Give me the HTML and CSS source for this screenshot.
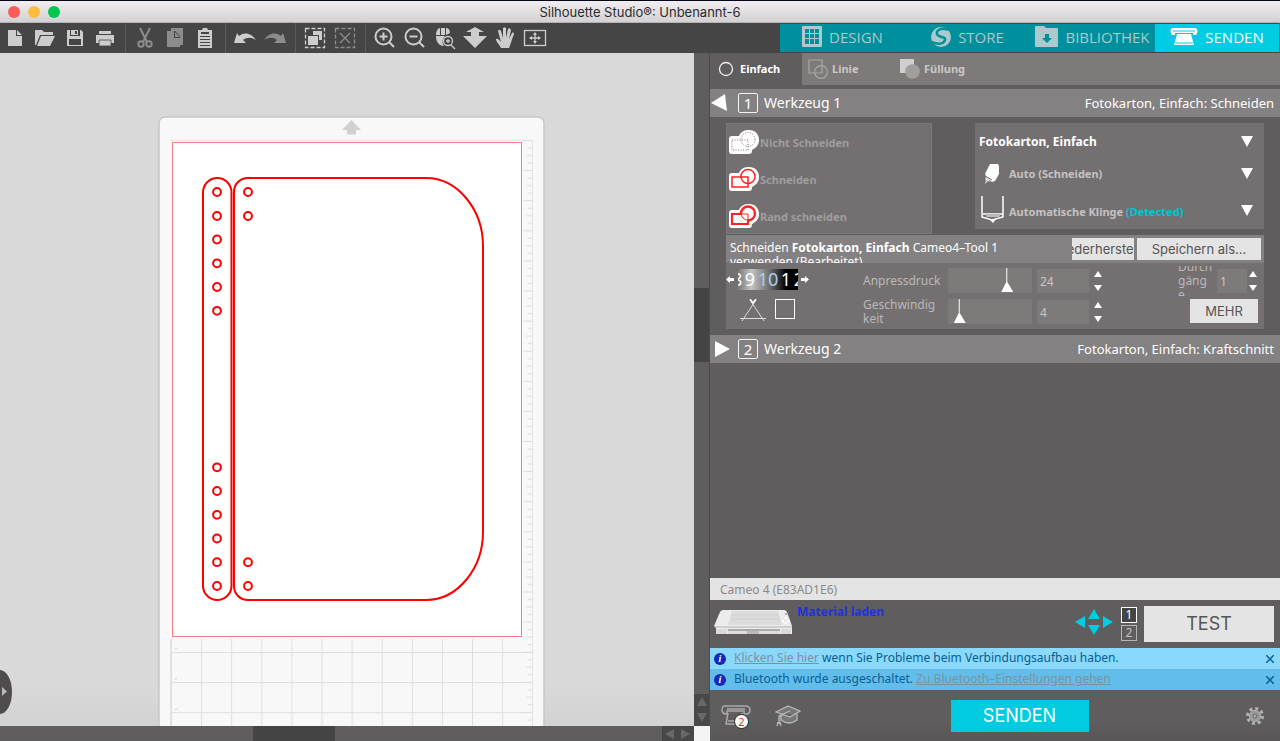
FILE: index.html
```html
<!DOCTYPE html>
<html lang="de">
<head>
<meta charset="utf-8">
<title>Silhouette Studio®: Unbenannt-6</title>
<link rel="stylesheet" href="styles.css">
</head>
<body>
<header class="titlebar">
  <div class="lights"><i class="light red"></i><i class="light amber"></i><i class="light green"></i></div>
  <span class="title">Silhouette Studio®: Unbenannt-6</span>
</header>

<div class="topbar">
  <div class="tools">
    <div class="group">
      <button class="tool" aria-label="Neu"><svg viewBox="0 0 30 30"><path d="M8 7h8v6h6v10H8zM17 7l5 5h-5z"/></svg></button>
      <button class="tool" aria-label="Öffnen"><svg viewBox="0 0 30 30"><path d="M5 7h7l2 2h9v3H10L6 22H5zM11 13h14l-5 10H7z"/></svg></button>
      <button class="tool" aria-label="Speichern"><svg viewBox="0 0 30 30"><path fill-rule="evenodd" d="M7 7h3v6h10V7h1l2 2v14H7zM9 16v6h12v-6zM11 7h7v5h-7zM15 8v3h2V8z"/></svg></button>
      <button class="tool" aria-label="Drucken"><svg viewBox="0 0 30 30"><path d="M9 8h12v3H9zM6 12h18v8h-3v-3H9v3H6z"/><path d="M9 17h12v6H9z" stroke="#454545" stroke-width=".8"/></svg></button>
    </div>
    <div class="group">
      <button class="tool dim" aria-label="Ausschneiden"><svg viewBox="0 0 30 30"><path d="M10 5l7 14M20 5l-7 14" class="line thick"/><circle cx="11" cy="21" r="2.700" class="line thick"/><circle cx="19" cy="21" r="2.700" class="line thick"/></svg></button>
      <button class="tool dim" aria-label="Kopieren"><svg viewBox="0 0 30 30"><path d="M11 5h12v17h-3v-9l-5-5h-4z"/><path d="M7 8h7v7h6v9H7zM15 9l5 5h-5z"/></svg></button>
      <button class="tool" aria-label="Einfügen"><svg viewBox="0 0 30 30"><path fill-rule="evenodd" d="M8 7h4l1-2h4l1 2h4v18H8zM11 9v2h8V9zM10 13v1h10v-1zM10 16v1h10v-1zM10 19v1h10v-1zM10 22v1h10v-1z"/></svg></button>
    </div>
    <div class="group">
      <button class="tool" aria-label="Rückgängig"><svg viewBox="0 0 30 30"><path d="M4 20l3-10 2 3c6-5 13-2 17 4-5-3-9-3-13 0l3 3z"/></svg></button>
      <button class="tool dim" aria-label="Wiederholen"><svg viewBox="0 0 30 30"><path d="M26 20l-3-10-2 3C15 8 8 11 4 17c5-3 9-3 13 0l-3 3z"/></svg></button>
    </div>
    <div class="group">
      <button class="tool" aria-label="Alles auswählen"><svg viewBox="0 0 30 30"><rect x="5.500" y="5.500" width="19" height="19" class="line" stroke-dasharray="4 2"/><path d="M13 8h9v9h-3v-5h-6zM8 13h10v9H8z"/></svg></button>
      <button class="tool dim" aria-label="Auswahl aufheben"><svg viewBox="0 0 30 30"><rect x="5.500" y="5.500" width="19" height="19" class="line" stroke-dasharray="4 2"/><path d="M10 10l10 10M20 10L10 20" class="line"/></svg></button>
    </div>
    <div class="group last">
      <button class="tool" aria-label="Vergrößern"><svg viewBox="0 0 30 30"><circle cx="13.500" cy="13.500" r="8" class="line thick"/><path d="M13.500 9.500v8M9.500 13.500h8M19 19l5 5" class="line thick"/></svg></button>
      <button class="tool" aria-label="Verkleinern"><svg viewBox="0 0 30 30"><circle cx="13.500" cy="13.500" r="8" class="line thick"/><path d="M9.500 13.500h8M19 19l5 5" class="line thick"/></svg></button>
      <button class="tool" aria-label="Auswahl zoomen"><svg viewBox="0 0 30 30"><path d="M6 12c0-4 2-7 4-7v7zM11 5h4v7h-4zM16 5c3 0 4 3 4 5l-4 2zM6 13h9c-3 3-3 7-1 10-5 0-8-4-8-10z"/><circle cx="18" cy="18" r="4.500" class="line"/><path d="M18 16v4M16 18h4M21 22l4 4" class="line"/></svg></button>
      <button class="tool" aria-label="Zoom ziehen"><svg viewBox="0 0 30 30"><path d="M15 4l9 5h-5v4h8L15 25 3 13h8V9H6z"/></svg></button>
      <button class="tool" aria-label="Verschieben"><svg viewBox="0 0 30 30"><path d="M11 25c-1-3-5-6-5-9 2-1 3 1 5 3L8 8c1-2 2-1 3 0l2 7V5c1-1 2-1 3 0v10l2-9c1-1 2-1 3 1l-2 9 3-6c1-1 2 0 2 1-2 5-3 9-5 14z"/></svg></button>
      <button class="tool" aria-label="An Fenster anpassen"><svg viewBox="0 0 30 30"><rect x="4.500" y="7.500" width="21" height="15" class="line"/><path d="M15 10v10M10 15h10" class="line"/><path d="M13 12l2-3 2 3zM13 18l2 3 2-3zM12 13l-3 2 3 2zM18 13l3 2-3 2z"/></svg></button>
    </div>
  </div>
  <nav class="modes">
    <button class="mode"><svg width="20" height="22" viewBox="0 0 20 22"><path fill-rule="evenodd" d="M1 0h18q1 0 1 1v19q0 1-1 1H1q-1 0-1-1V1q0-1 1-1zM3 3v4h4V3zM8 3v4h4V3zM13 3v4h4V3zM3 8v4h4V8zM8 8v4h4V8zM13 8v4h4V8zM3 13v5h4v-5zM8 13v5h4v-5zM13 13v5h4v-5z"/></svg>DESIGN</button>
    <button class="mode"><svg width="20" height="20" viewBox="0 0 20 20"><circle cx="10" cy="10" r="10"/><path d="M17 3C11 0 5 3 6 7s9 2 8 6-6 5-14 2" fill="none" stroke="#008f9c" stroke-width="2.500"/></svg>STORE</button>
    <button class="mode"><svg width="23" height="22" viewBox="0 0 23 22"><path fill-rule="evenodd" d="M1 0h8l2 2h11q1 0 1 1v17q0 1-1 1H1q-1 0-1-1V1q0-1 1-1zM10 8v4H7l5 5 5-5h-3V8z"/></svg>BIBLIOTHEK</button>
    <button class="mode active"><svg width="28" height="20" viewBox="0 0 28 20"><path d="M2 1h24q3 3 0 7h-3V6H5v2H2q-3-4 0-7zM7 7h14l3 11H4z"/><path d="M3 4h22M5 16h18" fill="none" stroke="#00cce3"/></svg>SENDEN</button>
  </nav>
</div>

<main class="main">
  <section class="stage">
    <div class="canvas">
      <svg class="drawing" viewBox="0 53 694 673" preserveAspectRatio="xMidYMin slice">
        <defs>
          <pattern id="grid" x="171" y="652" width="30.100" height="30.100" patternUnits="userSpaceOnUse"><path d="M.5 0v30.100M0 .5h30.100" stroke="#dedede" fill="none"/></pattern>
          <pattern id="ticks" x="522" y="140" width="11" height="30.100" patternUnits="userSpaceOnUse"><path d="M1 .5h10M6 8h5M4 15.500h7M6 23h5" stroke="#dcdcdc" fill="none"/></pattern>
        </defs>
        <rect x="159" y="117" width="385" height="640" rx="6" fill="#f8f8f8" stroke="#c6c6c6" stroke-width="1.500"/>
        <path d="M351.500 120l9.500 10h-5v4.500h-9V130h-5z" fill="#d0d2d2"/>
        <rect x="170.500" y="140.500" width="362" height="600" fill="none" stroke="#e4e4e4"/>
        <rect x="522" y="140" width="11" height="600" fill="url(#ticks)"/>
        <rect x="171" y="638" width="361" height="100" fill="url(#grid)"/>
        <rect x="170" y="141" width="353" height="498" fill="#fbfbfb"/>
        <rect x="172.500" y="142.500" width="349" height="494" fill="#fff" stroke="#f97a7a"/>
        <g fill="none" stroke="#fb0000" stroke-width="2">
          <rect x="203" y="178" width="28.500" height="422" rx="14.250"/>
          <path d="M248 178h178c32 0 57 32 57 68v286c0 36-25 68-57 68H248c-8 0-14-6-14-14V192c0-8 6-14 14-14z"/>
          <circle cx="217" cy="192" r="3.900"/><circle cx="217" cy="216" r="3.900"/><circle cx="217" cy="239.500" r="3.900"/><circle cx="217" cy="263.300" r="3.900"/><circle cx="217" cy="287" r="3.900"/><circle cx="217" cy="310.800" r="3.900"/>
          <circle cx="217" cy="467.300" r="3.900"/><circle cx="217" cy="491" r="3.900"/><circle cx="217" cy="514.800" r="3.900"/><circle cx="217" cy="538.500" r="3.900"/><circle cx="217" cy="562.200" r="3.900"/><circle cx="217" cy="586" r="3.900"/>
          <circle cx="248" cy="192" r="3.900"/><circle cx="248" cy="216" r="3.900"/><circle cx="248" cy="562.200" r="3.900"/><circle cx="248" cy="586" r="3.900"/>
        </g>
        <path d="M175 649l2-1M175 680l2-2M175 710l3-2" stroke="#d4d4d4"/>
      </svg>
      <button class="drawer" aria-label="Seitenleiste öffnen"><svg width="12" height="44" viewBox="0 0 12 44"><path d="M2 17l5 4.500L2 26z" fill="#b9b9b9"/></svg></button>
    </div>
    <div class="vscroll"><div class="vthumb"></div>
      <div class="varrows"><svg width="16" height="32" viewBox="0 0 16 32"><path d="M8 3l5 9H3zM8 28l5-9H3z" fill="#686868"/></svg></div>
    </div>
    <div class="hscroll"><div class="hthumb"></div>
      <div class="harrows"><svg width="32" height="15" viewBox="0 0 32 15"><path d="M3 8l9-5v10zM28 8l-9-5v10z" fill="#686868"/></svg></div>
    </div>
    <div class="corner"></div>
  </section>

  <aside class="panel">
    <div class="tabs">
      <button class="tab active"><svg width="20" height="20" viewBox="0 0 20 20"><circle cx="8" cy="10" r="6.500" fill="none" stroke="#eee" stroke-width="1.300"/></svg>Einfach</button>
      <button class="tab"><svg width="20" height="20" viewBox="0 0 20 20" fill="none" stroke="#a9a6a6" stroke-width="1.200"><path d="M1 1h13v13H1z"/><circle cx="13" cy="13" r="6.400"/></svg>Linie</button>
      <button class="tab"><svg width="20" height="20" viewBox="0 0 20 20"><path d="M0 0h14v14H0z" fill="#d0cece"/><circle cx="12.500" cy="12.500" r="7.300" fill="#a29e9f"/></svg>Füllung</button>
    </div>

    <div class="section">
      <button class="caret" aria-label="Werkzeug 1 schließen"><svg width="18" height="18" viewBox="0 0 18 18"><path d="M1 9l14-9 2 17z" fill="#fff"/></svg></button>
      <span class="num">1</span><h2>Werkzeug 1</h2><span class="state">Fotokarton, Einfach: Schneiden</span>
    </div>

    <div class="settings">
      <div class="choices">
        <div class="cuts">
          <button class="cut"><svg width="32" height="28" viewBox="0 0 32 28"><use href="#blob"/><g fill="none" stroke="#777" stroke-dasharray="1 1.500"><path d="M4 11h16v10H4z"/><circle cx="20" cy="10.500" r="7"/></g></svg>Nicht Schneiden</button>
          <button class="cut"><svg width="32" height="28" viewBox="0 0 32 28"><g id="blob"><path d="M4 7h7C13 2 17 1 21 1c6 0 10 4 10 10 0 5-3 8-7 10 0 3-1 4-3 4H4q-3 0-3-3V10q0-3 3-3z" fill="#fff"/></g><g fill="none" stroke="#f22" stroke-width="1.500"><path d="M4 11h16v10H4z"/><circle cx="20" cy="10.500" r="7"/></g></svg>Schneiden</button>
          <button class="cut"><svg width="32" height="28" viewBox="0 0 32 28"><use href="#blob"/><g fill="none" stroke="#f22"><path d="M14 11H4v10h16v-4" stroke-width="2.200"/><path d="M13 11h7v7M13 10c0 4 3 7 7 7" stroke-width="1"/><path d="M13 11a7 7 0 1 1 7 6.500" stroke-width="2.400"/></g></svg>Rand schneiden</button>
        </div>
        <div class="material">
          <div class="pick"><select class="first" aria-label="Material"><option>Fotokarton, Einfach</option></select><svg class="down" viewBox="0 0 12 11"><path d="M0 0h12L6 11z"/></svg></div>
          <div class="pick"><svg class="pic" width="28" height="22" viewBox="0 0 28 22"><path d="M11 1h8l1 2v8l-4 7-3 1-4-3-3-5z" fill="#fff"/><path d="M6 12l6 4-2 1 1 2-2-1-3 3 1-4-1-1 1-2z" fill="#ddd"/><path d="M6 13l7 4" stroke="#747071"/></svg><select aria-label="Aktion"><option>Auto (Schneiden)</option></select><svg class="down" viewBox="0 0 12 11"><path d="M0 0h12L6 11z"/></svg></div>
          <div class="pick"><svg class="pic" width="28" height="30" viewBox="0 0 28 30"><path d="M3 1v21l10 3 11-3V1M4 19h20" fill="none" stroke="#fff" stroke-width="1.500"/><path d="M6 19h16l-2 3H8z" fill="#bbb"/><path d="M10 24l4 4 3-4z" fill="#fff"/></svg><button class="blade">Automatische Klinge <span>(Detected)</span></button><svg class="down" viewBox="0 0 12 11"><path d="M0 0h12L6 11z"/></svg></div>
        </div>
      </div>

      <div class="preset">
        <p>Schneiden <b>Fotokarton, Einfach</b> Cameo4–Tool 1 verwenden (Bearbeitet)</p>
        <button class="light-btn restore"><span>Wiederherstellen</span></button>
        <button class="light-btn save">Speichern als...</button>
      </div>

      <div class="params">
        <div class="depth">
          <div class="dial"><svg width="10" height="9" viewBox="0 0 10 9"><path d="M0 4.500L4 1v2h4v3H4v2z" fill="#fff"/></svg>
            <div class="wheel"><span>8</span><span>9</span><span class="cur">10</span><span>1</span><span>2</span></div>
            <svg width="10" height="9" viewBox="0 0 10 9"><path d="M9 4.500L5 1v2H1v3h4v2z" fill="#fff"/></svg></div>
          <div class="over"><svg width="28" height="24" viewBox="0 0 28 24"><path d="M11 1l2 3 12 18M17 1l-2 3L3 22M1 19.500h26" fill="none" stroke="#ddd"/><path d="M11 0l3 4 3-4" fill="none" stroke="#fff" stroke-width="1.500"/></svg><input type="checkbox" aria-label="Linienüberschnitt"></div>
        </div>
        <div class="sliders">
          <label for="force">Anpressdruck</label><input id="force" class="range" type="range" min="0" max="100" value="74">
          <input class="value" type="text" value="24" aria-label="Anpressdruck Wert"><svg class="spin" viewBox="0 0 8 20"><path d="M0 6l4-6 4 6zM0 14h8l-4 6z"/></svg>
          <label for="speed">Geschwindig<br>keit</label><input id="speed" class="range" type="range" min="0" max="100" value="8">
          <input class="value" type="text" value="4" aria-label="Geschwindigkeit Wert"><svg class="spin" viewBox="0 0 8 20"><path d="M0 6l4-6 4 6zM0 14h8l-4 6z"/></svg>
        </div>
        <div class="more">
          <div class="passes"><label for="passes"><span>Durch<br>gäng<br>e</span></label><input id="passes" class="value small" type="text" value="1"><svg class="spin" viewBox="0 0 8 20"><path d="M0 6l4-6 4 6zM0 14h8l-4 6z"/></svg></div>
          <button class="light-btn mehr">MEHR</button>
        </div>
      </div>
    </div>

    <div class="section">
      <button class="caret" aria-label="Werkzeug 2 öffnen"><svg width="18" height="18" viewBox="0 0 18 18"><path d="M5 1v16l15-8z" fill="#fff"/></svg></button>
      <span class="num">2</span><h2>Werkzeug 2</h2><span class="state">Fotokarton, Einfach: Kraftschnitt</span>
    </div>
    <div class="spacer"></div>

    <div class="device">Cameo 4 (E83AD1E6)</div>
    <div class="machine">
      <svg width="79" height="26" viewBox="0 0 79 26"><path d="M9 1h61q2 0 3 2l5 14v8H2v-6L0 17 6 3q1-2 3-2z" fill="#ececec"/><path d="M18 2h46l4 14H14z" fill="#dcdcdc"/><path d="M17 6h48M16 10h50" stroke="#cfcfcf"/><path d="M1 18h77" stroke="#b0b0b0"/><path d="M14 20h52v2H14z" fill="#aaa"/><path d="M14 22h52v3H14z" fill="#ddd"/><path d="M33 22h12v3H33z" fill="#bbb"/><path d="M2 20h11v5H2zM67 20h10v5H67z" fill="#dadada"/><path d="M68 12h2M74 12h2M71 9h2M71 14h2" stroke="#fff" stroke-width="2"/><path d="M71 5h2" stroke="#5865c0"/></svg>
      <strong>Material laden</strong>
      <button class="move" aria-label="Material bewegen"><svg width="38" height="26" viewBox="0 0 38 26"><path d="M0 13l10-6v12zM38 13l-10-6v12zM19 0l6 10H13zM19 26l6-10H13z" fill="#00cce3"/></svg></button>
      <div class="heads"><button class="on">1</button><button>2</button></div>
      <button class="light-btn test">TEST</button>
    </div>
    <div class="notice"><i class="info">i</i><p><a href="#">Klicken Sie hier</a> wenn Sie Probleme beim Verbindungsaufbau haben.</p><button class="close" aria-label="Schließen"><svg width="8" height="8" viewBox="0 0 8 8"><path d="M0 0l8 8M8 0L0 8"/></svg></button></div>
    <div class="notice alt"><i class="info">i</i><p>Bluetooth wurde ausgeschaltet. <a href="#">Zu Bluetooth–Einstellungen gehen</a></p><button class="close" aria-label="Schließen"><svg width="8" height="8" viewBox="0 0 8 8"><path d="M0 0l8 8M8 0L0 8"/></svg></button></div>
    <footer class="footer">
      <button class="plain jobs" aria-label="Geräte"><svg width="30" height="26" viewBox="0 0 30 26"><path d="M4 3h20q5 0 5 4t-4 4h-2V8H6v3H4Q1 10 1 7q0-4 3-4zM6 6h18M7 10l-2 11h17l-1-11M7 18h12" fill="none" stroke="#a9a9a9" stroke-width="1.500"/></svg><span class="badge">2</span></button>
      <button class="plain" aria-label="Hilfe"><svg width="26" height="22" viewBox="0 0 26 22"><path d="M1 7L13 1l12 5-10 6zM6 10v5q8 6 16 0V9M15 6L4 11v8M3 17l-1 4M5 17l1 4" fill="#777" stroke="#b9b9b9" stroke-width="1.300"/></svg></button>
      <button class="send">SENDEN</button>
      <button class="plain gear" aria-label="Einstellungen"><svg width="18" height="18" viewBox="-9 -9 18 18"><circle r="7.500" fill="none" stroke="#b2b2b2" stroke-width="3" stroke-dasharray="3 2.890"/><circle r="5.500" fill="#999" stroke="#b2b2b2"/><circle r="2" fill="#aaa" stroke="#666"/></svg></button>
    </footer>
  </aside>
</main>
</body>
</html>
```
FILE: styles.css
```css
* { box-sizing: border-box; }
body {
  margin: 0;
  height: 100vh;
  display: flex;
  flex-direction: column;
  overflow: hidden;
  background: #5f5d5e;
  color: #fff;
  font: 12px/14px "Noto Sans", sans-serif;
}
button, input, select { font: inherit; color: inherit; border: 0; padding: 0; margin: 0; background: none; }
svg { display: block; flex: none; }
h2, p { margin: 0; font-weight: 400; }

.titlebar {
  flex: none;
  height: 23px;
  display: grid;
  grid-template-columns: 1fr auto 1fr;
  align-items: center;
  border-top: 1px solid #050518;
  border-bottom: 1px solid #b5b3b4;
  background: linear-gradient(#f1edf0, #d3d1d3);
}
.lights { display: flex; gap: 8px; padding-left: 8px; }
.light { width: 12px; height: 12px; border-radius: 50%; }
.red { background: #fc5b57; }
.amber { background: #fdbc40; }
.green { background: #00c750; }
.title { color: #2b2a2b; font-family: Inter, sans-serif; font-size: 13px; }

.topbar { flex: none; height: 30px; display: flex; background: #454545; border-right: 1px solid #5f5d5e; }
.tools { flex: 1; display: flex; }
.group { display: flex; padding: 0 5px 0 4px; border-right: 1px solid #5a5a5a; }
.group:first-child { padding-left: 0; }
.group.last { border: 0; }
.tool { width: 30px; height: 30px; fill: #cdcdcd; stroke: none; }
.tool svg { width: 30px; height: 30px; }
.tool .line { fill: none; stroke: #cdcdcd; stroke-width: 1.3; }
.tool .line.thick { stroke-width: 2; }
.tool.dim { fill: #8c8c8c; }
.tool.dim .line { stroke: #8c8c8c; }
.modes { display: grid; grid-template-columns: repeat(3, 125px) 124px; margin: 1px 0; background: #008f9c; }
.mode { display: flex; align-items: center; justify-content: center; gap: 7px; padding-bottom: 2px; color: #acc9cc; fill: #acc9cc; font-family: "Open Sans", sans-serif; font-size: 15px; line-height: 20px; }
.mode.active { background: #00cce3; color: #fff; fill: #fff; }

.main { flex: 1; min-height: 0; display: flex; }
.stage { flex: 1; min-width: 0; display: grid; grid-template: 1fr 15px / 1fr 16px; background: #5f5d5e; }
.canvas { position: relative; min-height: 0; background: linear-gradient(#d9d9d9 94%, #d2d2d2); overflow: hidden; }
.drawing { width: 100%; height: 100%; }
.drawer { position: absolute; left: 0; bottom: 12px; width: 12px; height: 44px; border-radius: 0 12px 12px 0 / 0 22px 22px 0; background: #4f4c4d; }
.vscroll { display: flex; flex-direction: column; justify-content: space-between; border-right: 1px solid #4c4b4b; padding-top: 235px; }
.vthumb { height: 74px; background: #444; }
.varrows, .harrows { background: #484848; overflow: hidden; }
.hscroll { display: flex; justify-content: space-between; padding-left: 253px; }
.hthumb { width: 82px; background: #444; }
.corner { background: #f4f4f4; }

.panel { flex: 0 0 570px; display: flex; flex-direction: column; }
.tabs { display: flex; height: 32px; margin-bottom: 4px; background: #7e7a79; }
.tab { width: 92px; display: flex; align-items: center; gap: 4px; padding-left: 6px; color: #cbc8c8; font-size: 11px; font-weight: 700; text-align: left; }
.tab.active { background: #5f5d5e; color: #fff; gap: 2px; padding-left: 8px; }

.section { height: 28px; display: flex; align-items: center; padding-right: 6px; background: #848182; }
.caret { width: 28px; }
.caret svg { overflow: visible; }
.num { width: 20px; height: 20px; border: 1px solid #f3f3f3; border-radius: 2px; text-align: center; font-size: 15px; line-height: 18px; }
h2 { margin-left: 6px; padding-bottom: 1px; font-size: 14px; line-height: 20px; }
.state { margin-left: auto; padding-bottom: 1px; font-size: 13px; line-height: 20px; }

.settings { padding: 6px 16px; }
.choices { display: flex; justify-content: space-between; align-items: flex-start; }
.cuts { width: 206px; height: 111px; border: 1px solid #7c7879; background: #747071; }
.cut { display: flex; align-items: center; width: 100%; height: 37px; padding-left: 1px; color: #a09d9e; font-size: 11px; font-weight: 700; }
.material { width: 289px; height: 106px; padding-top: 3px; background: #747071; }
.pick { position: relative; display: flex; align-items: center; height: 32px; padding-left: 4px; color: #c4c2c2; }
.pick:last-child { height: 39px; }
.pick select, .blade { appearance: none; flex: 1; height: 28px; text-align: left; font-size: 11px; font-weight: 700; }
.pick .first { color: #fff; font-size: 12px; }
.pic { margin-right: 2px; }
.blade { padding-top: 4px; }
.blade span { color: #00c3d9; }
.down { position: absolute; right: 11px; top: 10px; width: 12px; height: 11px; fill: #fff; pointer-events: none; }
.pick:last-child .down { top: 15px; }

.preset { display: flex; height: 28px; margin-top: 1px; padding: 3px 3px 3px 4px; gap: 3px; background: #848182; }
.preset p { flex: 1; height: 25px; padding: 3px 32px 0 0; overflow: hidden; }
.light-btn { background: #e4e4e4; color: #565455; font-family: Inter, sans-serif; font-size: 13px; }
.restore { width: 62px; height: 22px; display: flex; justify-content: center; overflow: hidden; align-items: center; white-space: nowrap; }
.save { width: 124px; height: 22px; }

.params { display: flex; height: 66px; background: #747071; }
.depth { width: 90px; padding-top: 6px; }
.dial { display: flex; align-items: center; gap: 2px; height: 21px; }
.wheel { width: 60px; height: 21px; display: flex; justify-content: space-between; overflow: hidden; background: linear-gradient(90deg, #777, #c4c4c4 22%, #666 55%, #000 80%); font: 18px/21px "Noto Sans", sans-serif; }
.wheel span:first-child { margin-left: -6px; }
.wheel span:last-child { margin-right: -6px; }
.wheel .cur { color: #a9cdf5; }
.over { display: flex; gap: 8px; padding: 9px 0 0 13px; }
.over input { appearance: none; width: 20px; height: 20px; border: 1px solid #fff; }
.sliders { display: grid; grid-template-columns: 80px 84px 52px 8px; column-gap: 5px; row-gap: 6px; grid-auto-rows: 25px; align-items: center; padding: 5px 0; margin-left: 47px; color: #bab8b8; }
.range { appearance: none; width: 84px; height: 25px; background: #7e7a79; }
.range::-webkit-slider-thumb { appearance: none; width: 12px; height: 25px; background: #fff; clip-path: polygon(5px 0, 6px 0, 6px 14px, 12px 24px, 0 24px, 5px 14px); }
.value { width: 52px; height: 24px; padding: 2px 0 0 3px; background: #7e7a79; color: #c8c6c6; }
.spin { width: 8px; height: 20px; fill: #fff; }
.more { margin-left: auto; padding: 5px 6px 0 0; width: 86px; }
.passes { display: flex; align-items: center; height: 25px; color: #bab8b8; width: 80px; }
.passes label { width: 39px; height: 30px; display: flex; align-items: center; overflow: hidden; }
.value.small { width: 30px; margin-right: 2px; }
.mehr { display: block; width: 68px; height: 24px; margin: 6px 0 0 12px; }

.spacer { flex: 1; }
.device { height: 22px; padding: 1px 10px; background: #e4e4e4; color: #8b8a8b; line-height: 22px; }
.machine { display: flex; height: 48px; padding: 6px 6px 6px 4px; }
.machine > svg { margin-top: 3px; }
.machine strong { margin: -1px 0 0 4px; color: #2032dd; }
.move { margin-left: auto; height: 32px; }
.heads { display: grid; gap: 2px; align-content: start; margin: 1px 7px 0 8px; }
.heads button { width: 16px; height: 16px; border: 1px solid #b5b3b4; color: #c5c3c4; line-height: 14px; }
.heads .on { border-color: #fff; background: #444; color: #fff; }
.test { width: 130px; font-size: 18px; }

.notice { display: flex; align-items: center; height: 21px; padding: 0 6px 0 4px; background: #8ad8fb; color: #075f92; }
.notice.alt { background: #63bdeb; }
.notice p { padding-bottom: 1px; }
.notice a { color: #7b929e; }
.info { width: 12px; height: 12px; margin-right: 8px; border-radius: 50%; background: #1428bd; color: #fff; font: italic 700 10px/12px "Liberation Serif", serif; text-align: center; }
.close { margin-left: auto; stroke: #075f92; stroke-width: 1.5; fill: none; }

.footer { display: grid; grid-template-columns: 54px 1fr 138px 1fr; align-items: center; height: 51px; padding: 0 16px 0 11px; background: linear-gradient(#5f5d5e 60%, #585657); }
.plain { position: relative; justify-self: start; }
.send { height: 32px; background: #00cbe1; color: #fff; font-family: Inter, sans-serif; font-size: 18px; }
.gear { justify-self: end; }
.badge { position: absolute; left: 13px; top: 11px; width: 15px; height: 15px; border: 1px solid #222; border-radius: 50%; background: #fff; color: #e4252a; font-size: 11px; line-height: 13px; }
```
